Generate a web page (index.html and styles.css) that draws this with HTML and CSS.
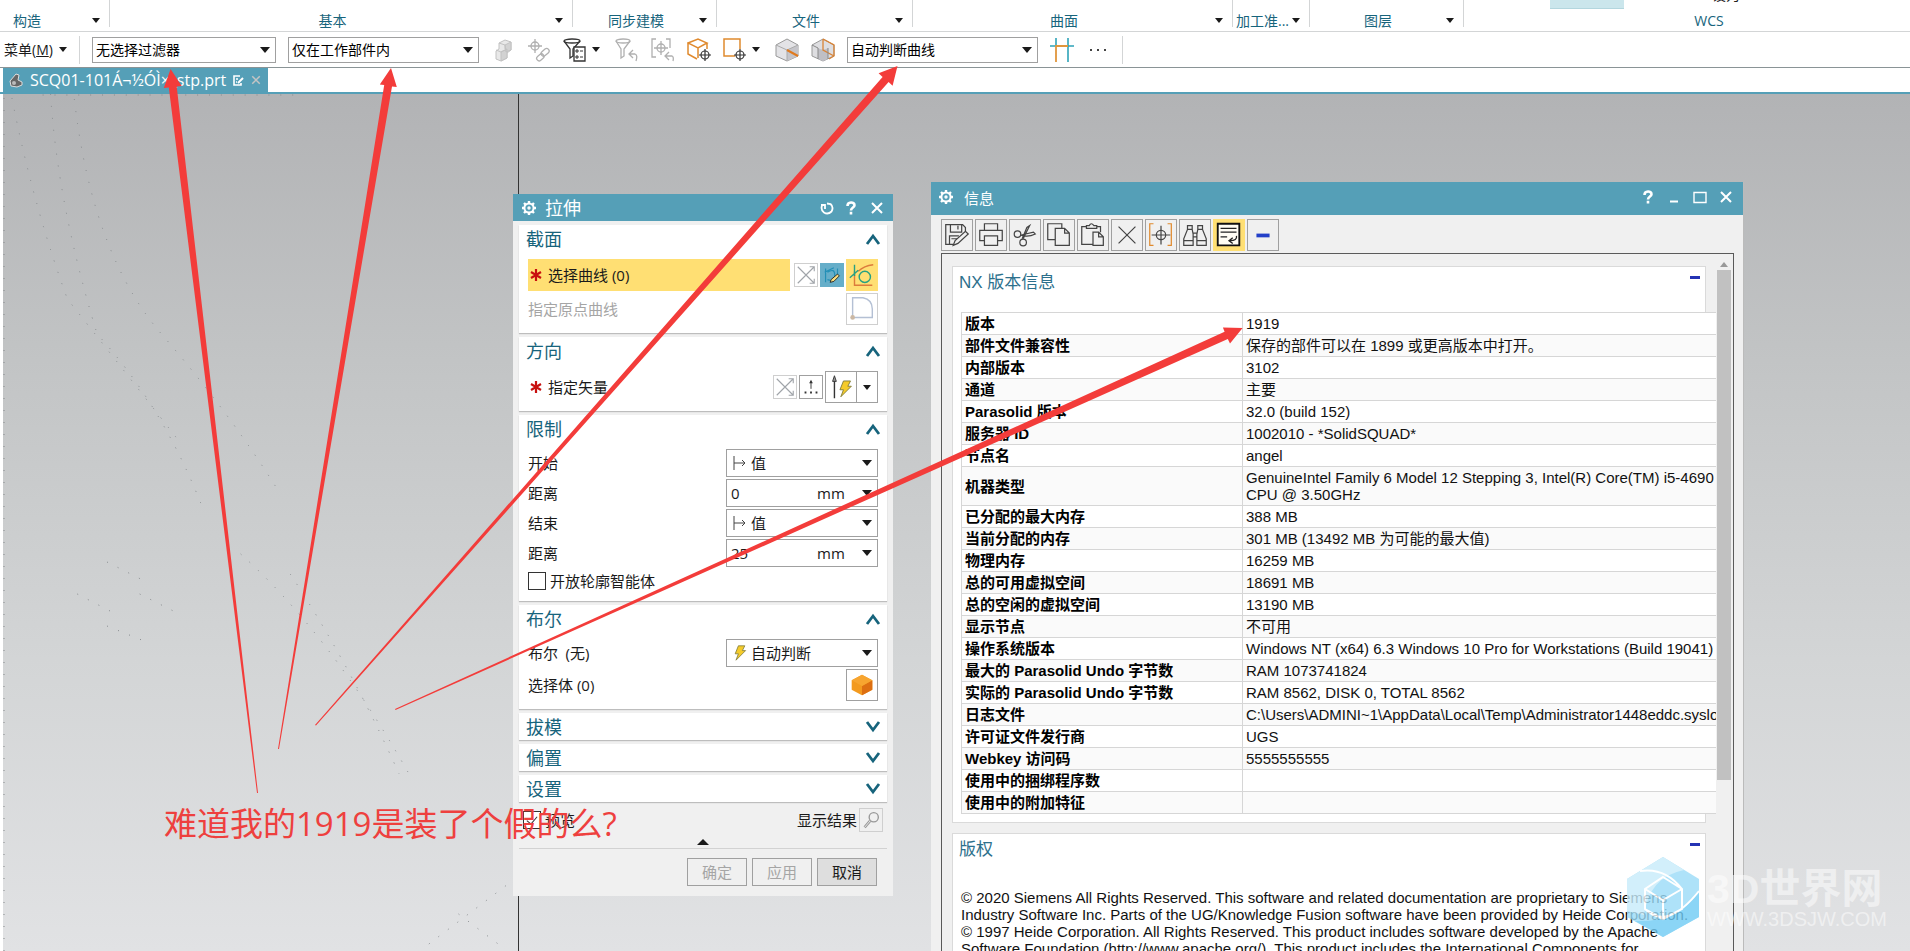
FILE: index.html
```html
<!DOCTYPE html>
<html lang="zh-CN">
<head>
<meta charset="utf-8">
<title>NX - SCQ01-101</title>
<link rel="stylesheet" href="styles.css">
</head>
<body>
<svg class="defs" aria-hidden="true">
  <symbol id="gear" viewBox="0 0 16 16"><g fill="none" stroke="currentColor"><circle cx="8" cy="8" r="4.6" stroke-width="2"/><circle cx="8" cy="8" r="1" stroke-width="1.4"/><path stroke-width="2.4" d="M8 1v2M8 13v2M1 8h2M13 8h2M3 3l1.4 1.4M11.6 11.6L13 13M3 13l1.4-1.4M11.6 4.4L13 3"/></g></symbol>
  <symbol id="close" viewBox="0 0 16 16"><path d="M3 3l10 10M13 3L3 13" fill="none" stroke="currentColor" stroke-width="2"/></symbol>
  <symbol id="help" viewBox="0 0 16 16"><path d="M4.500 6C4.500 1.500 11.500 1.500 11.500 5.200C11.500 7.600 8 7.400 8 10.500M8 11.800v2.600" fill="none" stroke="currentColor" stroke-width="2.600"/></symbol>
  <symbol id="up" viewBox="0 0 16 12"><path d="M2 11L8 3l6 8" fill="none" stroke="currentColor" stroke-width="2.800"/></symbol>
  <symbol id="down" viewBox="0 0 16 12"><path d="M2 1l6 8 6-8" fill="none" stroke="currentColor" stroke-width="2.800"/></symbol>
  <symbol id="cross-arrows" viewBox="0 0 24 24"><path d="M3 3l18 18M3 21L21 3M16 3h5v5M16 21h5v-5" fill="none" stroke="#a0a4a9" stroke-width="1.200"/></symbol>
  <symbol id="bolt" viewBox="0 0 16 20"><path d="M6 1h8l-3 6h4L3 19l3-8H2z" fill="#f5cb2b" stroke="#7d7a38" stroke-width="1"/></symbol>
  <symbol id="from" viewBox="0 0 16 16"><path d="M2 1v14M2 8h11M10 5l3 3-3 3" fill="none" stroke="#444"/></symbol>
  <symbol id="required" viewBox="0 0 12 12"><path d="M6 0v12M1 3l10 6M11 3L1 9" fill="none" stroke="#c8100f" stroke-width="2.200"/></symbol>
</svg>

<div class="app">
  <header class="ribbon">
    <div class="group g-construct"><span>构造</span><i class="tri"></i></div>
    <div class="group g-basic"><span>基本</span><i class="tri"></i></div>
    <div class="group g-sync"><span>同步建模</span><i class="tri"></i></div>
    <div class="group g-file"><span>文件</span><i class="tri"></i></div>
    <div class="group g-surface"><span>曲面</span><i class="tri"></i></div>
    <div class="group g-machining"><span>加工准...</span><i class="tri"></i></div>
    <div class="group g-layer"><span>图层</span><i class="tri"></i></div>
    <div class="group g-wcs"><div class="cut"><b></b><em>设为</em></div><span>WCS</span></div>
  </header>

  <div class="toolbar">
    <button class="menu">菜单(<u>M</u>) <i class="tri"></i></button>
    <label class="combo c1"><select aria-label="过滤器"><option>无选择过滤器</option></select></label>
    <label class="combo c2"><select aria-label="范围"><option>仅在工作部件内</option></select></label>
    <button class="tool" aria-label="部件"><svg viewBox="0 0 24 24"><g stroke="#c2c2c2" stroke-width="1"><path fill="#e8e8e8" d="M8 5l6-3 6 2v8l-4 3v5l-6 3-5-2v-8l3-2z"/><path fill="#d2d2d2" d="M10 14l6-3v9l-6 3zM14 7l6-3v8l-5 2z"/><path fill="none" d="M5 12l5 2 6-3M8 5l6 2v4"/></g></svg></button>
    <button class="tool" aria-label="链接"><svg viewBox="0 0 24 24"><g fill="none" stroke="#b0b0b0" stroke-width="1.300"><circle cx="8" cy="8" r="4"/><path d="M8 1v14M1 8h14"/><rect x="9" y="17" width="8" height="5" rx="2.500" transform="rotate(-40 13 19)"/><rect x="14" y="12" width="9" height="5" rx="2.500" transform="rotate(-40 18 15)"/></g></svg></button>
    <button class="tool wide" aria-label="筛选"><svg viewBox="0 0 24 24"><g fill="none" stroke="#333" stroke-width="1.300"><ellipse cx="9" cy="3" rx="8" ry="2"/><path d="M1 3l6 8v9l3-2v-7l7-8"/><path fill="#fff" d="M11 9h11v14H11z"/><path d="M13 12h2v2h-2zM13 18h2v2h-2zM17 13h3M17 19h3" stroke-width="1"/></g></svg><i class="tri"></i></button>
    <button class="tool" aria-label="重置筛选"><svg viewBox="0 0 24 24"><g fill="none" stroke="#b0b0b0" stroke-width="1.300"><ellipse cx="8" cy="3" rx="7" ry="2"/><path d="M1 3l5 8v9l3-2v-7l6-8M14 16h6q3 1 1 7M18 12l-4 4 4 4"/></g></svg></button>
    <button class="tool" aria-label="取消选择"><svg viewBox="0 0 24 24"><g fill="none" stroke="#b0b0b0" stroke-width="1.300"><path d="M5 1H1v18h4M15 1h4v9"/><circle cx="10" cy="10" r="4"/><path d="M10 3v14M3 10h14M14 18h7q2 1 1 5M18 14l-4 4 4 4"/></g></svg></button>
    <button class="tool" aria-label="实体捕捉"><svg viewBox="0 0 24 24"><g fill="none" stroke="#e08a2e" stroke-width="1.500"><path d="M1 5l10-4 9 4-9 5zM1 5v11l9 5M11 10v10M20 5v6"/></g><g fill="none" stroke="#333" stroke-width="1.200"><circle cx="18" cy="17" r="4"/><path d="M18 11v12M12 17h12"/></g></svg></button>
    <button class="tool wide" aria-label="矩形选择"><svg viewBox="0 0 24 24"><path d="M12 18H1V1h16v10" fill="none" stroke="#e08a2e" stroke-width="1.500"/><g fill="none" stroke="#333" stroke-width="1.200"><circle cx="17" cy="17" r="4"/><path d="M17 11v12M11 17h12"/></g></svg><i class="tri"></i></button>
    <button class="tool" aria-label="边"><svg viewBox="0 0 24 24"><path fill="#e3e3e6" stroke="#999" d="M12 1l11 6v11l-11 5-11-5V7z"/><path fill="#c5c5ca" d="M12 12l11-5v11l-11 5z"/><path d="M1 7l11 5v11M12 12l11-5" fill="none" stroke="#aaa"/><path d="M12 12l11 6" stroke="#e07a1e" stroke-width="2"/></svg></button>
    <button class="tool" aria-label="面"><svg viewBox="0 0 24 24"><path fill="#dedee1" stroke="#999" d="M12 1l11 6v11l-11 5-11-5V7z"/><path fill="#bfbfc5" d="M7 10q5 3 10 0v11l-5 2-5-2z"/><path d="M12 1v11l11 6M12 1l11 6v11l-5 3" fill="none" stroke="#d98436" stroke-width="1.300"/><path d="M1 7l6 3v11M17 10v11" fill="none" stroke="#888"/></svg></button>
    <label class="combo c2"><select aria-label="曲线规则"><option>自动判断曲线</option></select></label>
    <button class="tool" aria-label="在相交处停止"><svg viewBox="0 0 24 24"><path d="M6 0v8M18 0v24M0 8h6M18 8h6" stroke="#2ea3b8" stroke-width="1.600"/><path d="M6 24V8h12" fill="none" stroke="#e0963c" stroke-width="1.800"/></svg></button>
    <button class="tool" aria-label="更多"><svg viewBox="0 0 24 24"><path fill="#444" d="M4 11h2v2H4zM11 11h2v2h-2zM18 11h2v2h-2z"/></svg></button>
    <span class="sep"></span>
  </div>

  <nav class="tabs">
    <div class="tab">
      <svg class="part" viewBox="0 0 16 16"><path fill="#666" stroke="#ddd" d="M2 9l6-7 3 1-1 5 4 2v3l-5 2-6-1z"/><circle cx="6" cy="11" r="2" fill="#bbb"/></svg>
      <span>SCQ01-101Á¬½ÓÌ×_stp.prt</span>
      <svg class="mod" viewBox="0 0 12 12"><path d="M8 2H2v9h7V9M4 5h2M4 8h1" fill="none" stroke="#fff" stroke-width="1.600"/><path d="M6 9l5-5" stroke="#fff" stroke-width="2"/></svg>
      <button class="tab-close" aria-label="关闭"><svg viewBox="0 0 16 16"><use href="#close"/></svg></button>
    </div>
  </nav>

  <main class="viewport">
    <svg class="traces" viewBox="0 0 520 857" preserveAspectRatio="none" aria-hidden="true">
      <path d="M9 4Q30 110 65 205Q125 280 180 350"/><path d="M48 0Q55 110 95 240Q160 310 200 410"/><path d="M72 5Q90 160 160 240Q230 320 280 400"/><path d="M1 4V857"/><path d="M105 468l40 20M75 500l35 18M105 532l40 16M138 500l36 18"/><path d="M240 460q90 80 170 220M290 480q60 90 110 200M430 850l80-60M460 820l40 30"/>
      <path d="M40 1h260"/>
    </svg>
  </main>
</div>

<section class="dialog" aria-label="拉伸">
  <header class="titlebar">
    <svg class="ico"><use href="#gear"/></svg><h1>拉伸</h1>
    <button aria-label="重置"><svg viewBox="0 0 16 16"><path d="M3 5.500Q1.500 10 5 12.500Q9 15 12.500 11.500Q15 7 11.500 4L8 3.500M2 5h4v4" fill="none" stroke="currentColor" stroke-width="1.800"/></svg></button>
    <button aria-label="帮助"><svg><use href="#help"/></svg></button>
    <button aria-label="关闭"><svg><use href="#close"/></svg></button>
  </header>
  <div class="dialog-body">
    <section class="panel">
      <h2>截面<svg><use href="#up"/></svg></h2>
      <div class="rows">
        <div class="row tall">
          <div class="pick active"><svg><use href="#required"/></svg>选择曲线 (0)</div>
          <button class="sq off" aria-label="反向"><svg><use href="#cross-arrows"/></svg></button>
          <button class="sq sketch" aria-label="绘制截面"><svg viewBox="0 0 24 24"><path d="M5 20V5M4 9l10-5M7 9q8-5 8 3t-8 5M18 5v8" fill="none" stroke="#238fb6" stroke-width="1.300"/><path d="M11 17l7-6 2 2-6 6-4 1z" fill="#f8dc7d" stroke="#222"/></svg></button>
          <button class="big curve" aria-label="曲线"><svg viewBox="0 0 32 32"><path d="M8 12v15h19M12 12Q18 6 28 5" fill="none" stroke="#dc7c3c" stroke-width="1.500"/><path d="M8 5v12M3 19l9-8" stroke="#27a083" stroke-width="1.500"/><circle cx="19" cy="18" r="6" fill="none" stroke="#27a083" stroke-width="1.500"/></svg></button>
        </div>
        <div class="row tall">
          <span class="name muted">指定原点曲线</span>
          <button class="big off" aria-label="原点曲线"><svg viewBox="0 0 32 32"><path d="M6 25V4h11q10 2 10 12v9z" fill="none" stroke="#b4c0d4" stroke-width="1.500"/><circle cx="6" cy="25" r="2.500" fill="#cbb8a4"/></svg></button>
        </div>
      </div>
    </section>
    <section class="panel">
      <h2>方向<svg><use href="#up"/></svg></h2>
      <div class="rows">
        <div class="row tall">
          <div class="pick"><svg><use href="#required"/></svg>指定矢量</div>
          <button class="sq off" aria-label="反向"><svg><use href="#cross-arrows"/></svg></button>
          <button class="sq" aria-label="矢量对话框"><svg viewBox="0 0 24 24"><path d="M12 14V6" stroke="#333"/><path d="M12 4l2 4h-4zM5 17h2v2H5zM11 17h2v2h-2zM17 17h2v2h-2z" fill="#333"/></svg></button>
          <button class="split" aria-label="自动判断矢量"><svg viewBox="0 0 32 32"><path d="M9 28V9" stroke="#333" stroke-width="1.500"/><path d="M9 4l2 6H7z" fill="#999" stroke="#333"/><use href="#bolt" x="13" y="8" width="15" height="20"/></svg><span><i class="tri"></i></span></button>
        </div>
      </div>
    </section>
    <section class="panel">
      <h2>限制<svg><use href="#up"/></svg></h2>
      <div class="rows">
        <div class="row"><label class="name" for="start">开始</label><div class="combo field"><svg><use href="#from"/></svg><select id="start"><option>值</option></select></div></div>
        <div class="row"><label class="name" for="d1">距离</label><div class="combo field num"><input id="d1" value="0"><select aria-label="单位"><option>mm</option></select></div></div>
        <div class="row"><label class="name" for="end">结束</label><div class="combo field"><svg><use href="#from"/></svg><select id="end"><option>值</option></select></div></div>
        <div class="row"><label class="name" for="d2">距离</label><div class="combo field num"><input id="d2" value="25"><select aria-label="单位"><option>mm</option></select></div></div>
        <div class="row check"><input type="checkbox" id="open"><label for="open">开放轮廓智能体</label></div>
      </div>
    </section>
    <section class="panel">
      <h2>布尔<svg><use href="#up"/></svg></h2>
      <div class="rows">
        <div class="row"><label class="name" for="bool">布尔&ensp;(无)</label><div class="combo field"><svg><use href="#bolt"/></svg><select id="bool"><option>自动判断</option></select></div></div>
        <div class="row tall"><span class="name">选择体 (0)</span><button class="big" aria-label="选择体"><svg viewBox="0 0 32 32"><path fill="#f39a1f" d="M16 5l11 6v10l-11 6-11-6V11z"/><path fill="#dd6f12" d="M16 17l11-6v10l-11 6z"/><path fill="#f7a530" d="M16 5l11 6-11 6-11-6z"/></svg></button></div>
      </div>
    </section>
    <section class="panel closed"><h2>拔模<svg><use href="#down"/></svg></h2></section>
    <section class="panel closed"><h2>偏置<svg><use href="#down"/></svg></h2></section>
    <section class="panel closed"><h2>设置<svg><use href="#down"/></svg></h2></section>
    <div class="preview">
      <input type="checkbox" id="preview" checked><label for="preview">预览</label>
      <span class="result">显示结果</span>
      <button class="sq off" aria-label="显示结果"><svg viewBox="0 0 24 24"><circle cx="15" cy="9" r="5" fill="none" stroke="#999" stroke-width="1.500"/><path d="M11 13l-6 7" stroke="#999" stroke-width="3"/><path d="M11 13l-6 7" stroke="#eee"/></svg></button>
    </div>
    <div class="fold"><i></i></div>
    <footer><button disabled>确定</button><button disabled>应用</button><button class="cancel">取消</button></footer>
  </div>
</section>

<section class="info" aria-label="信息">
  <header class="titlebar">
    <svg class="ico"><use href="#gear"/></svg><h1>信息</h1>
    <button aria-label="帮助"><svg><use href="#help"/></svg></button>
    <button aria-label="最小化"><svg viewBox="0 0 16 16"><path d="M4 12.500h8" stroke="currentColor" stroke-width="2"/></svg></button>
    <button aria-label="最大化"><svg viewBox="0 0 16 16"><path d="M2 3.500h12v10H2z" fill="none" stroke="currentColor" stroke-width="1.400"/></svg></button>
    <button aria-label="关闭"><svg><use href="#close"/></svg></button>
  </header>
  <div class="info-tools">
    <button aria-label="另存为"><svg viewBox="0 0 32 32"><path d="M12 26H4V5h18l3 3v4M9 5v8h12V5M17 6v4M8 26v-9h10M10 20h6"/><path d="M12 27l2-5 11-10 3 3-11 10z"/></svg></button>
    <button aria-label="打印"><svg viewBox="0 0 32 32"><path d="M9 11V4h14v7M9 22H4V11h24v11h-5M9 17h14v10H9z"/></svg></button>
    <button aria-label="剪切"><svg viewBox="0 0 32 32"><circle cx="8" cy="15" r="3.500"/><circle cx="14" cy="24" r="3.500"/><path d="M11 16q8 3 16-1l-2-2-13 3M14 20l7-14-3 2-5 12"/></svg></button>
    <button aria-label="复制"><svg viewBox="0 0 32 32"><path d="M12 21H4V4h15v5M12 9h10l5 5v13H12zM22 9v5h5"/></svg></button>
    <button aria-label="粘贴"><svg viewBox="0 0 32 32"><path d="M16 26H4V7h5M20 7h4v6M9 9V6h3q2-4 5 0h3v3zM16 13h6l5 5v9H16zM22 13v5h5"/></svg></button>
    <button aria-label="删除"><svg viewBox="0 0 32 32"><path d="M7 7l18 18M25 7L7 25"/></svg></button>
    <button aria-label="定位"><svg viewBox="0 0 32 32"><circle cx="16" cy="16" r="5"/><path d="M16 6v20M6 16h20"/><path class="orange" d="M8 4H4v23h4M23 4h4v23h-4"/></svg></button>
    <button aria-label="查找"><svg viewBox="0 0 32 32"><path d="M8 10V6h5v4l1 5v12H4v-7zM19 10V6h5v4l4 10v7H18V15zM14 14h4M14 18h4M4 22h10M18 22h10M8 10h5M19 10h5"/></svg></button>
    <button class="on" aria-label="换行"><svg viewBox="0 0 32 32"><path class="dark" d="M4 4h23v23H4z"/><path class="line" d="M7 9h17M7 13h17M7 18h7M24 17q1 5-7 5M20 19l-4 3 4 3"/></svg></button>
    <button aria-label="折叠"><svg viewBox="0 0 32 32"><path class="blue" d="M9 16.500h14"/></svg></button>
  </div>
  <div class="frame">
    <div class="pane">
      <article class="card">
        <h2>NX 版本信息<i></i></h2>
        <table>
          <tr><th>版本</th><td>1919</td></tr>
          <tr><th>部件文件兼容性</th><td>保存的部件可以在 1899 或更高版本中打开。</td></tr>
          <tr><th>内部版本</th><td>3102</td></tr>
          <tr><th>通道</th><td>主要</td></tr>
          <tr><th>Parasolid 版本</th><td>32.0 (build 152)</td></tr>
          <tr><th>服务器 ID</th><td>1002010 - *SolidSQUAD*</td></tr>
          <tr><th>节点名</th><td>angel</td></tr>
          <tr><th>机器类型</th><td>GenuineIntel Family 6 Model 12 Stepping 3, Intel(R) Core(TM) i5-4690 CPU @ 3.50GHz</td></tr>
          <tr><th>已分配的最大内存</th><td>388 MB</td></tr>
          <tr><th>当前分配的内存</th><td>301 MB (13492 MB 为可能的最大值)</td></tr>
          <tr><th>物理内存</th><td>16259 MB</td></tr>
          <tr><th>总的可用虚拟空间</th><td>18691 MB</td></tr>
          <tr><th>总的空闲的虚拟空间</th><td>13190 MB</td></tr>
          <tr><th>显示节点</th><td>不可用</td></tr>
          <tr><th>操作系统版本</th><td>Windows NT (x64) 6.3 Windows 10 Pro for Workstations (Build 19041)</td></tr>
          <tr><th>最大的 Parasolid Undo 字节数</th><td>RAM 1073741824</td></tr>
          <tr><th>实际的 Parasolid Undo 字节数</th><td>RAM 8562, DISK 0, TOTAL 8562</td></tr>
          <tr><th>日志文件</th><td class="path">C:\Users\ADMINI~1\AppData\Local\Temp\Administrator1448eddc.syslog</td></tr>
          <tr><th>许可证文件发行商</th><td>UGS</td></tr>
          <tr><th>Webkey 访问码</th><td>5555555555</td></tr>
          <tr><th>使用中的捆绑程序数</th><td></td></tr>
          <tr><th>使用中的附加特征</th><td></td></tr>
        </table>
      </article>
      <article class="card">
        <h2>版权<i></i></h2>
        <p>© 2020 Siemens All Rights Reserved. This software and related documentation are proprietary to Siemens Industry Software Inc. Parts of the UG/Knowledge Fusion software have been provided by Heide Corporation. © 1997 Heide Corporation. All Rights Reserved. This product includes software developed by the Apache Software Foundation (http://www.apache.org/). This product includes the International Components for</p>
      </article>
    </div>
    <div class="scroll"><i></i><b></b></div>
  </div>
</section>

<svg class="arrows" viewBox="0 0 1910 951" preserveAspectRatio="none" aria-hidden="true">
  <path d="M257 793L168.800 87.400 163.800 88 170.600 69 181.700 86 176.700 86.400 258 793z"/>
  <path d="M278 749L384.200 85.100 379.800 84.500 391 68 396.800 87.100 392 86.400 279 749z"/>
  <path d="M315 725L882.600 76.900 878.600 73.200 897.500 66 892.600 85.800 888.600 82.100 316 725.500z"/>
  <path d="M395 709L1224.600 331.800 1222.900 327.500 1242.600 328 1230 343.500 1227.800 339 395.500 710z"/>
</svg>
<p class="note">难道我的1919是装了个假的么?</p>

<div class="watermark">
  <svg viewBox="0 0 72 80" aria-hidden="true"><path fill="#9bdcf8" d="M36 0l36 22v38L36 80 0 60V22z"/><path fill="#c8ecfb" d="M36 0l21 13Q22 20 17 58L0 54V22z"/><path fill="#6fcbf5" d="M72 34v26L36 80 8 64q44 2 64-30z"/><path fill="none" stroke="#fff" stroke-width="2" d="M36 20l19 12v20L36 62 18 52V32zM18 32l18 11 19-11M36 43v19M13 14Q38 10 55 32M18 52Q40 74 72 34"/></svg>
  <div><strong>3D世界网</strong><span>WWW.3DSJW.COM</span></div>
</div>
</body>
</html>
```
FILE: styles.css
```css
:root {
  --teal: #559fb7;
  --ink: #17647c;
  --ui: "Open Sans", "Noto Sans CJK SC", sans-serif;
  --doc: "Liberation Sans", "Noto Sans CJK SC", sans-serif;
}
* { box-sizing: border-box; }
body { margin: 0; position: relative; height: 100vh; overflow: hidden; background: #fff; color: #1a1a1a; font: 14px/20px var(--ui); }
button, input, select { font: inherit; color: inherit; margin: 0; padding: 0; border: 0; background: none; border-radius: 0; }
select { appearance: none; outline: 0; }
h1, h2, p { margin: 0; font-weight: 400; }
svg { display: block; flex: none; }
.defs { position: absolute; width: 0; height: 0; }
.tri { flex: none; width: 0; height: 0; border: 4px solid transparent; border-top: 5px solid #1a1a1a; border-bottom: 0; }

.app { display: flex; flex-direction: column; height: 100%; }

/* ribbon captions */
.ribbon { display: flex; height: 32px; border-bottom: 1px solid #d3d5d6; color: var(--ink); }
.group { display: flex; align-items: center; height: 27px; padding: 14px 9px 0 0; border-right: 1px solid #d3d5d6; }
.group span { flex: 1; text-align: center; white-space: nowrap; }
.g-construct { width: 110px; padding-left: 13px; }
.g-construct span { text-align: left; }
.g-basic { width: 463px; }
.g-sync { width: 144px; }
.g-file { width: 196px; }
.g-surface { width: 320px; }
.g-machining { width: 77px; }
.g-layer { width: 154px; }
.g-wcs { position: relative; flex: 1; border: 0; padding-right: 0; }
.g-wcs span { padding-left: 44px; }
.cut { position: absolute; left: 86px; top: 0; display: flex; gap: 88px; width: 220px; height: 9px; }
.cut b { width: 74px; background: #cbe6ec; border-bottom: 1px solid #b3d6de; }
.cut em { height: 5px; overflow: hidden; display: flex; align-items: flex-end; font-style: normal; color: #222; }

/* selection toolbar */
.toolbar { display: flex; align-items: center; gap: 12px; height: 36px; padding-left: 4px; border-bottom: 1px solid #8a9496; }
.menu { display: flex; align-items: center; width: 76px; height: 28px; border-right: 1px solid #d3d5d6; white-space: nowrap; }
.menu .tri { margin-left: 6px; }
.combo { position: relative; display: flex; align-items: center; height: 26px; border: 1px solid #a0a0a0; background: #fff; }
.combo select { flex: 1; min-width: 0; height: 100%; padding-left: 3px; }
.combo::after { content: ""; position: absolute; right: 5px; top: 50%; margin-top: -3px; border: 5px solid transparent; border-top: 6px solid #1a1a1a; border-bottom: 0; pointer-events: none; }
.toolbar .combo { color: #000; }
.c1 { width: 184px; }
.c2 { width: 191px; }
.tool { display: flex; align-items: center; gap: 5px; width: 24px; height: 28px; }
.tool svg { width: 24px; height: 24px; }
.tool.wide { width: 40px; }
.sep { width: 1px; height: 28px; background: #d3d5d6; }

/* file tabs */
.tabs { display: flex; height: 26px; padding-left: 3px; border-bottom: 2px solid var(--teal); }
.tab { display: flex; align-items: center; gap: 6px; padding: 0 6px 0 5px; background: var(--teal); color: #fff; font-size: 16px; line-height: 24px; white-space: nowrap; }
.part { width: 16px; height: 16px; }
.mod { width: 12px; height: 12px; }
.tab-close { color: #c4c4c4; }
.tab-close svg { width: 12px; height: 12px; }

.viewport { flex: 1; min-height: 0; margin-left: 3px; background: linear-gradient(#b2b3b5, #c3c5c6 33%, #d3d5d6 66%, #e1e2e4); }
.traces { width: 516px; height: 100%; border-right: 1px solid #333; fill: none; stroke: #85898c; stroke-width: 1; stroke-dasharray: 1 11; }

/* tool windows */
.titlebar { display: flex; align-items: center; background: var(--teal); color: #fff; }
.titlebar h1 { flex: 1; }
.titlebar svg { width: 16px; height: 16px; }
.dialog { position: absolute; left: 513px; top: 194px; width: 380px; font-size: 15px; background: #f0f0f0; }
.dialog .titlebar { height: 27px; padding: 0 8px; gap: 8px; }
.dialog .titlebar h1 { font-size: 18px; line-height: 24px; }
.dialog .titlebar button:last-child { margin-left: 2px; }
.dialog-body { display: flex; flex-direction: column; gap: 4px; padding: 4px 6px 10px; }
.panel { padding: 0 9px 8px; background: #fff; box-shadow: 0 1px 1px #bdbdbd; }
.panel h2 { display: flex; justify-content: space-between; align-items: center; height: 28px; margin: 0 -2px 6px; color: var(--ink); font-size: 18px; line-height: 26px; }
.panel h2 svg { width: 16px; height: 12px; margin-right: -1px; }
.panel.closed { padding-bottom: 0; }
.panel.closed h2 { height: 27px; margin-bottom: 0; }
.rows { display: flex; flex-direction: column; gap: 2px; }
.row { display: flex; align-items: center; gap: 2px; height: 28px; }
.row.tall { height: 32px; }
.name { flex: 1; }
.muted { color: #a5a5a5; }
.pick { display: flex; align-items: center; gap: 6px; flex: 1; height: 100%; margin-right: 2px; padding-left: 2px; }
.pick svg { width: 12px; height: 12px; }
.pick.active { background: #ffdf73; }
.sq, .big, .split { display: flex; align-items: center; justify-content: center; border: 1px solid #a0a0a0; background: #fff; }
.sq { width: 24px; height: 24px; }
.sq svg { width: 22px; height: 22px; }
.big { width: 32px; height: 32px; }
.big svg { width: 30px; height: 30px; }
.off { border-color: #cfcfcf; }
.sketch { border-color: #66aec9; background: #66aec9; }
.curve { border-color: #ffdf73; background: #ffdf73; }
.split { width: 53px; height: 32px; }
.split svg { width: 30px; height: 30px; }
.split span { display: flex; align-items: center; justify-content: center; flex: 1; height: 100%; border-left: 1px solid #a0a0a0; }
.field { width: 152px; height: 28px; padding-left: 5px; }
.field svg { width: 16px; height: 16px; }
.num { padding-left: 4px; }
.num input { width: 86px; height: 100%; outline: 0; }
.num select { padding-left: 0; }
.row.check { height: 24px; gap: 4px; }
input[type="checkbox"] { appearance: none; width: 18px; height: 18px; border: 1px solid #333; background: #fff; }
input[type="checkbox"]:checked::after { content: ""; display: block; width: 5px; height: 9px; margin: 2px auto; border: solid #333; border-width: 0 1px 1px 0; transform: rotate(40deg); }
.preview { display: flex; align-items: center; gap: 4px; height: 24px; margin-top: 2px; padding: 0 4px; }
.preview .result { margin-left: auto; }
.preview .sq { margin-left: -2px; background: none; }
.fold { display: flex; justify-content: center; align-items: flex-end; height: 17px; margin-top: -4px; padding-bottom: 3px; border-bottom: 1px solid #d2d2d2; }
.fold i { border: 6px solid transparent; border-bottom: 6px solid #1a1a1a; border-top: 0; }
.dialog footer { display: flex; justify-content: flex-end; gap: 5px; padding: 5px 10px 0 0; }
.dialog footer button { width: 60px; height: 28px; border: 1px solid #a0a0a0; }
.dialog footer button:disabled { color: #a5a5a5; }
.dialog footer .cancel { background: #dedede; }

.info { position: absolute; left: 931px; top: 182px; bottom: 0; width: 812px; display: flex; flex-direction: column; background: #f0f0f0; font: 15px/17px var(--doc); box-shadow: 1px 0 #bbb; }
.info .titlebar { height: 33px; padding: 0 9px 4px 7px; gap: 10px; font-family: var(--ui); }
.info .titlebar h1 { padding-top: 2px; font-size: 15px; line-height: 20px; }
.info-tools { display: flex; gap: 2px; padding: 4px 10px 2px; }
.info-tools button { width: 32px; height: 32px; border: 1px solid #a0a0a0; }
.info-tools svg { width: 30px; height: 30px; fill: none; stroke: #444; stroke-width: 1.3; }
.info-tools .on { border-color: #ffdf73; background: #ffdf73; }
.info-tools .dark { stroke: #111; stroke-width: 2; fill: #fffdf4; }
.info-tools .line { stroke: #222; stroke-width: 1.4; }
.info-tools .orange { stroke: #e08a2e; }
.info-tools .blue { stroke: #2340c8; stroke-width: 4; }
.frame { flex: 1; min-height: 0; display: flex; margin: 0 9px 0 10px; border: 1px solid #5a5a5a; border-bottom: 0; }
.pane { flex: 1; min-width: 0; overflow: hidden; padding: 12px 10px 0 10px; }
.card { margin-bottom: 10px; padding: 0 8px 8px; border: 1px solid #dadada; background: #fff; }
.card h2 { display: flex; justify-content: space-between; height: 45px; margin: 0 -2px; padding-top: 6px; color: #2c708c; font-size: 17px; line-height: 20px; }
.card h2 i { width: 10px; height: 3px; margin: 3px -1px 0 0; background: #2433b4; }
.card p { padding: 10px 5px 0 0; color: #111; }
table { width: 100%; border-collapse: collapse; background: #fff; }
tr:nth-child(even) { background: #fafafa; }
th, td { height: 22px; padding: 2px 3px; border: 1px solid #d6d6d6; text-align: left; color: #111; }
th { min-width: 281px; width: 281px; font-weight: 700; color: #000; white-space: nowrap; }
.path { white-space: nowrap; }
.scroll { width: 17px; padding: 8px 2px 0 1px; }
.scroll i { display: block; width: 0; margin: 0 auto 3px; border: 4px solid transparent; border-bottom: 5px solid #999; border-top: 0; }
.scroll b { display: block; height: 74%; background: #c1c1c1; }

/* markup drawn over the windows */
.arrows { position: absolute; left: 0; top: 0; width: 100%; height: 100%; fill: #f33c3a; pointer-events: none; }
.note { position: absolute; left: 164px; top: 800px; color: #ee403e; font-size: 33px; line-height: 48px; white-space: nowrap; }
.watermark { position: absolute; right: 25px; bottom: 14px; display: flex; gap: 8px; color: rgba(255, 255, 255, .5); font-family: var(--doc); white-space: nowrap; }
.watermark svg { width: 72px; height: 80px; opacity: .8; }
.watermark div { display: flex; flex-direction: column; width: 178px; padding-top: 12px; }
.watermark strong { font-size: 41px; line-height: 40px; }
.watermark span { font-size: 20px; line-height: 20px; }
```
